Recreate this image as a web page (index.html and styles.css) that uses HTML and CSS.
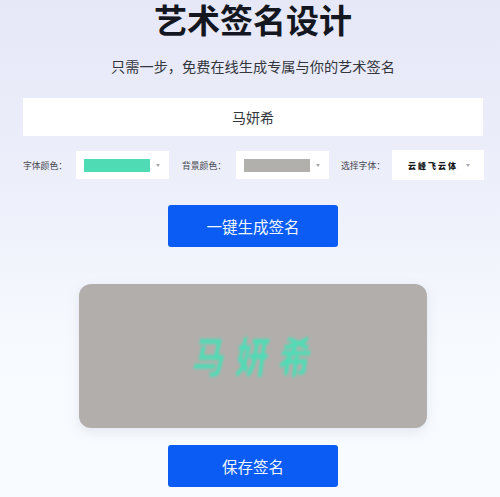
FILE: index.html
```html
<!DOCTYPE html>
<html lang="zh-CN">
<head>
    <meta charset="UTF-8" />
    <meta name="viewport" content="width=device-width, initial-scale=1" />
    <title>艺术签名设计</title>
    <link rel="stylesheet" href="styles.css">
</head>
<body>
    <div class="container">
        <h1 class="title">艺术签名设计</h1>
        <p class="subtitle">只需一步&#xFF0C;免费在线生成专属与你的艺术签名</p>
        <div class="name-input">马妍希</div>

        <div class="options">
            <span class="option-label">字体颜色&#xFF1A;</span>
            <div class="select-box color-select">
                <span class="swatch swatch-font"></span>
                <span class="arrow"></span>
            </div>
            <span class="option-label">背景颜色&#xFF1A;</span>
            <div class="select-box color-select">
                <span class="swatch swatch-bg"></span>
                <span class="arrow"></span>
            </div>
            <span class="option-label">选择字体&#xFF1A;</span>
            <div class="select-box font-select">
                <span class="font-name">云峰飞云体</span>
                <span class="arrow"></span>
            </div>
        </div>

        <button class="action-btn generate-btn">一键生成签名</button>

        <div class="signature">
            <span class="signature-text">马妍希</span>
        </div>

        <button class="action-btn save-btn">保存签名</button>
    </div>
</body>
</html>
```

FILE: styles.css
```css
* {
    box-sizing: border-box;
    margin: 0;
    padding: 0;
}
html, body {
    height: 100%;
}
body {
    font-family: "Noto Sans CJK SC", "Liberation Sans", sans-serif;
    background: linear-gradient(180deg, #e6e8f8 0%, #eceefa 35%, #f7fafe 70%, #f8fbff 100%);
    color: #22252e;
    overflow: hidden;
}
.container {
    display: flex;
    flex-direction: column;
    align-items: center;
    padding: 0 17px 0 23px;
}
.title {
    font-size: 33px;
    line-height: 38px;
    font-weight: 700;
    color: #14171f;
}
.subtitle {
    margin-top: 18px;
    font-size: 14.2px;
    line-height: 20px;
    color: #33363d;
}
.name-input {
    width: 460px;
    height: 38px;
    margin-top: 22px;
    background: #fff;
    font-size: 14px;
    line-height: 38px;
    text-align: center;
    color: #33363d;
}
.options {
    display: flex;
    align-items: center;
    width: 460px;
    height: 30px;
    margin-top: 14px;
}
.option-label {
    flex: none;
    width: 53px;
    font-size: 8.8px;
    color: #44474f;
    white-space: nowrap;
}
.select-box {
    flex: none;
    display: flex;
    align-items: center;
    width: 93px;
    height: 28px;
    background: #fff;
}
.select-box + .option-label {
    margin-left: 13px;
    width: 54px;
}
.color-select + .option-label + .color-select + .option-label {
    margin-left: 12px;
}
.font-select {
    width: 92px;
    height: 30px;
    margin-left: -3px;
}
.color-select .swatch {
    width: 66px;
    height: 13px;
    margin-left: 8px;
}
.swatch-font {
    background: #4fdcb5;
}
.swatch-bg {
    background: #b2b0ac;
}
.arrow {
    width: 0;
    height: 0;
    margin-left: 6px;
    border-left: 2.5px solid transparent;
    border-right: 2.5px solid transparent;
    border-top: 3px solid #a5a8b0;
}
.font-name {
    width: 56px;
    margin-left: 16px;
    font-size: 8px;
    font-weight: 900;
    letter-spacing: 2px;
    white-space: nowrap;
    color: #17181c;
}
.font-select .arrow {
    margin-left: 2px;
}
.action-btn {
    display: block;
    width: 170px;
    height: 42px;
    background: #0a5cf5;
    border: none;
    border-radius: 3px;
    color: #f1f6ff;
    font-family: inherit;
    font-size: 15.5px;
    font-weight: 400;
}
.generate-btn {
    margin-top: 25px;
}
.signature {
    display: flex;
    align-items: center;
    justify-content: center;
    width: 348px;
    height: 144px;
    margin-top: 37px;
    padding-bottom: 5px;
    background: #b2aeab;
    border-radius: 12px;
    box-shadow: 0 4px 12px rgba(120, 125, 150, 0.15);
}
.signature-text {
    display: inline-block;
    margin-right: -11px;
    font-size: 32px;
    font-weight: 700;
    letter-spacing: 11px;
    color: #4fdcb5;
    filter: blur(1.2px);
    transform: skewX(-8deg) scaleY(1.3);
}
.save-btn {
    margin-top: 17px;
}
```
